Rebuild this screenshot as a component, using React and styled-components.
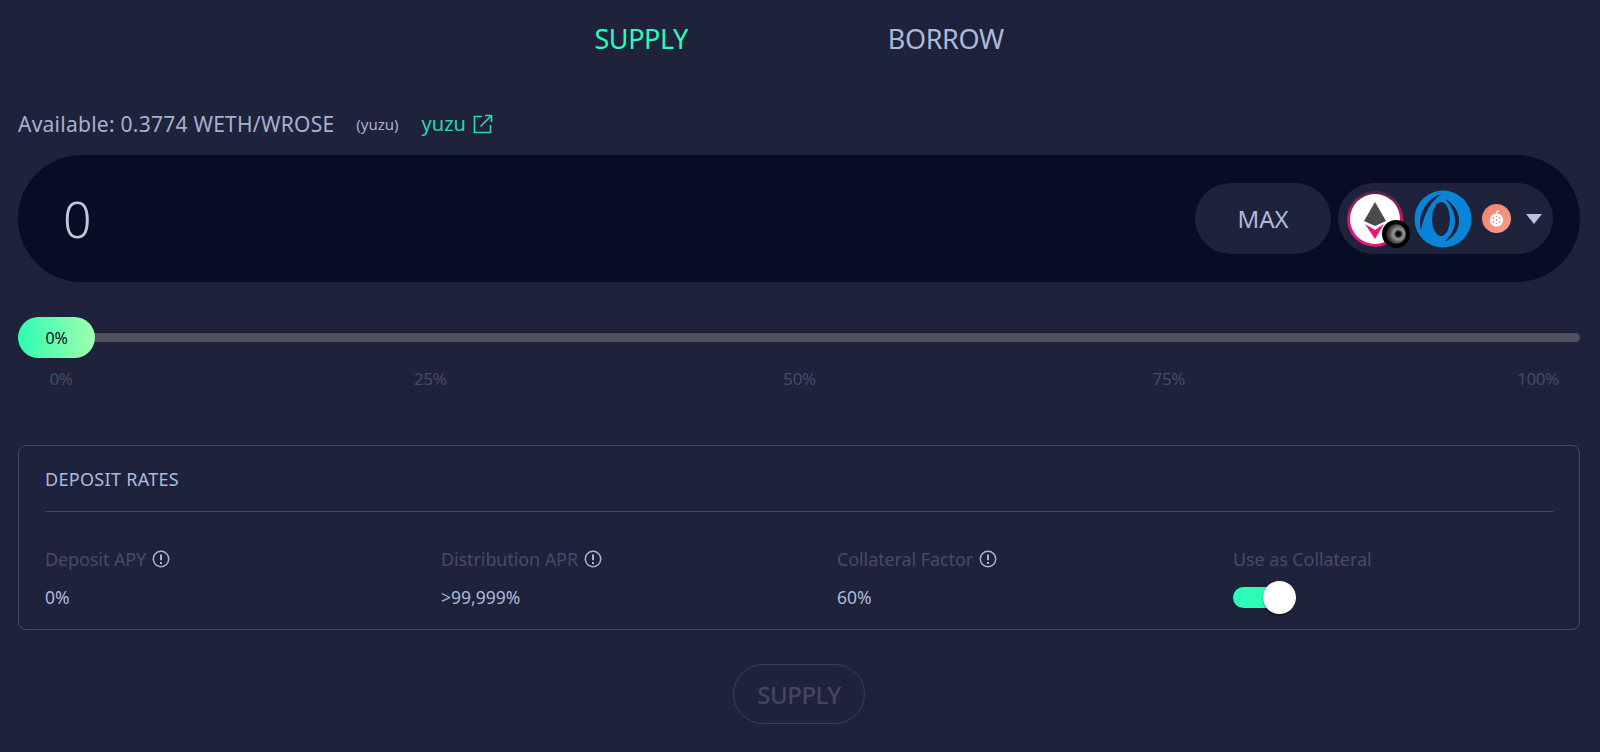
import React from "react";
import styled, { createGlobalStyle } from "styled-components";

const GlobalStyle = createGlobalStyle`
  html, body {
    margin: 0;
    padding: 0;
    background: #1e223b;
    font-family: "Noto Sans", "Liberation Sans", sans-serif;
    overflow: hidden;
  }
`;

const Page = styled.div`
  width: 1600px;
  height: 752px;
  box-sizing: border-box;
  padding: 0 20px 0 18px;
  background: #1e223b;
  color: #bcc8e8;
`;

const Tabs = styled.div`
  display: flex;
  justify-content: center;
  gap: 200px;
  height: 110px;
  padding-top: 22px;
  box-sizing: border-box;
`;

const Tab = styled.div`
  font-size: 27px;
  line-height: 34px;
  letter-spacing: -0.4px;
  color: ${props => (props.$active ? "#2dfcb9" : "#aeb9da")};
`;

const AvailableRow = styled.div`
  display: flex;
  align-items: center;
  height: 27px;
  margin-bottom: 18px;
`;

const AvailableText = styled.span`
  font-size: 21px;
  letter-spacing: 0.25px;
  color: #a5b1d1;
`;

const PoolTag = styled.span`
  font-size: 15px;
  margin-left: 22px;
  color: #a5b1d1;
`;

const PoolLink = styled.a`
  display: flex;
  align-items: center;
  gap: 7px;
  margin-left: 23px;
  font-size: 20px;
  color: #2ad8a6;
`;

const InputBar = styled.div`
  display: flex;
  align-items: center;
  height: 127px;
  border-radius: 64px;
  padding: 0 27px 0 45px;
  background: #080d24;
`;

const Amount = styled.div`
  flex: 1;
  font-size: 50px;
  font-weight: 300;
  color: #bcc8e8;
`;

const MaxButton = styled.div`
  width: 136px;
  height: 71px;
  border-radius: 36px;
  margin-right: 7px;
  display: flex;
  align-items: center;
  justify-content: center;
  font-size: 24px;
  color: #aeb9da;
  background: #1e223b;
`;

const TokenSelect = styled.div`
  display: flex;
  align-items: center;
  width: 215px;
  height: 71px;
  box-sizing: border-box;
  border-radius: 36px;
  padding-left: 9px;
  background: #1e223b;
`;

const TokenStack = styled.div`
  position: relative;
  width: 56px;
  height: 56px;
  margin-right: 11px;
`;

const Badge = styled.div`
  position: absolute;
  right: -7px;
  bottom: -1px;
  width: 28px;
  height: 28px;
`;

const SmallToken = styled.div`
  width: 29px;
  height: 29px;
  margin: 0 15px 0 10px;
`;

const Caret = styled.div`
  width: 0;
  height: 0;
  border-left: 8px solid transparent;
  border-right: 8px solid transparent;
  border-top: 10px solid #b6c2e2;
`;

const Slider = styled.div`
  position: relative;
  margin-top: 35px;
  height: 41px;
  display: flex;
  align-items: center;
`;

const Track = styled.div`
  flex: 1;
  height: 9px;
  border-radius: 5px;
  background: #50515f;
`;

const Thumb = styled.div`
  position: absolute;
  left: 0;
  top: 0;
  width: 77px;
  height: 41px;
  border-radius: 21px;
  display: flex;
  align-items: center;
  justify-content: center;
  font-size: 16px;
  letter-spacing: -0.3px;
  color: #0a0d1c;
  background: linear-gradient(90deg, #2dfcb1, #a1ffae);
`;

const Marks = styled.div`
  display: flex;
  justify-content: space-between;
  padding: 0 20px 0 21px;
  margin-top: 10px;
  margin-bottom: 55px;
  font-size: 17px;
  line-height: 22px;
  letter-spacing: -0.4px;
  color: #474b66;
`;

const Mark = styled.span`
  width: 44px;
  text-align: center;
`;

const RatesCard = styled.div`
  height: 185px;
  box-sizing: border-box;
  border: 1.5px solid #484a5c;
  border-radius: 8px;
  padding: 0 26px;
`;

const RatesTitle = styled.div`
  height: 65px;
  display: flex;
  align-items: center;
  border-bottom: 1.5px solid #45475a;
  font-size: 18px;
  letter-spacing: 0.3px;
  color: #aeb9da;
`;

const RatesGrid = styled.div`
  display: grid;
  grid-template-columns: repeat(4, 396px);
  padding-top: 34px;
`;

const RateLabel = styled.div`
  display: flex;
  align-items: center;
  gap: 6px;
  height: 26px;
  font-size: 18px;
  letter-spacing: -0.1px;
  color: #474b66;
  svg {
    color: #a9b4d4;
  }
`;

const RateValue = styled.div`
  height: 26px;
  margin-top: 12px;
  display: flex;
  align-items: center;
  font-size: 17.5px;
  color: #aeb9da;
`;

const Toggle = styled.div`
  position: relative;
  width: 46px;
  height: 21px;
  margin-top: 15px;
  border-radius: 11px;
  background: #2dfcb9;
`;

const ToggleKnob = styled.div`
  position: absolute;
  right: -17px;
  top: -6px;
  width: 33px;
  height: 33px;
  border-radius: 50%;
  background: #fff;
  box-shadow: 0 1px 2px rgba(0, 0, 0, 0.5);
`;

const SubmitRow = styled.div`
  display: flex;
  justify-content: center;
  margin-top: 34px;
`;

const SubmitButton = styled.div`
  width: 132px;
  height: 60px;
  box-sizing: border-box;
  border: 1.5px solid #3c3e50;
  border-radius: 30px;
  display: flex;
  align-items: center;
  justify-content: center;
  font-size: 24px;
  font-weight: 500;
  letter-spacing: -0.5px;
  color: #44465a;
`;

const ExternalIcon = () => (
  <svg width="20" height="20" viewBox="0 0 20 20" fill="none" stroke="#2ad8a6" strokeWidth="1.7">
    <path d="M9 2.5H1.5v16h16V11" />
    <path d="M7.5 12.5L18 2M12 1.5h6.5V8" />
  </svg>
);

const InfoIcon = () => (
  <svg width="18" height="18" viewBox="0 0 18 18" fill="none" stroke="currentColor" strokeWidth="1.5">
    <circle cx="9" cy="9" r="7.7" />
    <path d="M9 4.5v5.8" strokeWidth="2" />
    <path d="M9 12.1v1.8" strokeWidth="2" />
  </svg>
);

const LpEthIcon = () => (
  <svg width="56" height="56" viewBox="0 0 56 56">
    <defs>
      <linearGradient id="ring" x1="0" y1="0" x2="0" y2="1">
        <stop offset="0" stopColor="#4d2b4a" />
        <stop offset="0.5" stopColor="#d0126c" />
        <stop offset="1" stopColor="#f0127a" />
      </linearGradient>
    </defs>
    <circle cx="28" cy="28" r="28" fill="url(#ring)" />
    <circle cx="28" cy="28" r="25" fill="#fff" />
    <path d="M28 11L17 30l11 5 11-5z" fill="#4a4a4a" />
    <path d="M18 33l10 6 9-6-9 15z" fill="#f0127a" />
  </svg>
);

const VortexIcon = () => (
  <svg width="28" height="28" viewBox="0 0 28 28">
    <defs>
      <radialGradient id="vortex" cx="0.62" cy="0.5" r="0.55">
        <stop offset="0" stopColor="#000" />
        <stop offset="0.2" stopColor="#0a0a0a" />
        <stop offset="0.45" stopColor="#9a9a9a" />
        <stop offset="0.7" stopColor="#666" />
        <stop offset="1" stopColor="#2a2a2a" />
      </radialGradient>
    </defs>
    <circle cx="14" cy="14" r="14" fill="#000" />
    <circle cx="14" cy="14" r="10" fill="url(#vortex)" />
  </svg>
);

const RoseIcon = () => (
  <svg width="58" height="58" viewBox="0 0 58 58">
    <circle cx="29" cy="29" r="28.5" fill="#0a84d6" />
    <ellipse cx="27" cy="29" rx="9" ry="17" fill="#1e223b" />
    <path d="M7 40C3 26 12 8 28 4C17 10 10 24 7 40Z" fill="#1e223b" />
    <path d="M31 9C41 14 46 24 45 33C44 42 38 49 30 52C37 46 41 39 41 31C41 23 37 15 31 9Z" fill="#1e223b" />
  </svg>
);

const YuzuIcon = () => (
  <svg width="29" height="29" viewBox="0 0 29 29">
    <defs>
      <linearGradient id="yuzu" x1="0" y1="0" x2="1" y2="1">
        <stop offset="0" stopColor="#f5806a" />
        <stop offset="1" stopColor="#f0a08c" />
      </linearGradient>
    </defs>
    <circle cx="14.5" cy="14.5" r="14.5" fill="url(#yuzu)" />
    <circle cx="14.5" cy="16" r="6.6" fill="#fff" />
    <path d="M14.5 9.5c.2-1.6 1-2.6 2.6-3" stroke="#fff" strokeWidth="1.4" fill="none" />
    <circle cx="14.5" cy="16" r="1" fill="#ee8f8c" />
    <circle cx="11.5" cy="14" r="0.9" fill="#ee8f8c" />
    <circle cx="17.5" cy="14" r="0.9" fill="#ee8f8c" />
    <circle cx="11.5" cy="18" r="0.9" fill="#ee8f8c" />
    <circle cx="17.5" cy="18" r="0.9" fill="#ee8f8c" />
    <circle cx="14.5" cy="12.5" r="0.8" fill="#ee8f8c" />
    <circle cx="14.5" cy="19.5" r="0.8" fill="#ee8f8c" />
  </svg>
);

const rates = [
  { label: "Deposit APY", value: "0%" },
  { label: "Distribution APR", value: ">99,999%" },
  { label: "Collateral Factor", value: "60%" }
];

const marks = ["0%", "25%", "50%", "75%", "100%"];

export default function App() {
  return (
    <Page>
      <GlobalStyle />
      <Tabs>
        <Tab $active>SUPPLY</Tab>
        <Tab>BORROW</Tab>
      </Tabs>
      <AvailableRow>
        <AvailableText>Available: 0.3774 WETH/WROSE</AvailableText>
        <PoolTag>(yuzu)</PoolTag>
        <PoolLink>
          yuzu <ExternalIcon />
        </PoolLink>
      </AvailableRow>
      <InputBar>
        <Amount>0</Amount>
        <MaxButton>MAX</MaxButton>
        <TokenSelect>
          <TokenStack>
            <LpEthIcon />
            <Badge>
              <VortexIcon />
            </Badge>
          </TokenStack>
          <RoseIcon />
          <SmallToken>
            <YuzuIcon />
          </SmallToken>
          <Caret />
        </TokenSelect>
      </InputBar>
      <Slider>
        <Track />
        <Thumb>0%</Thumb>
      </Slider>
      <Marks>
        {marks.map(mark => (
          <Mark key={mark}>{mark}</Mark>
        ))}
      </Marks>
      <RatesCard>
        <RatesTitle>DEPOSIT RATES</RatesTitle>
        <RatesGrid>
          {rates.map(rate => (
            <div key={rate.label}>
              <RateLabel>
                {rate.label} <InfoIcon />
              </RateLabel>
              <RateValue>{rate.value}</RateValue>
            </div>
          ))}
          <div>
            <RateLabel>Use as Collateral</RateLabel>
            <Toggle>
              <ToggleKnob />
            </Toggle>
          </div>
        </RatesGrid>
      </RatesCard>
      <SubmitRow>
        <SubmitButton>SUPPLY</SubmitButton>
      </SubmitRow>
    </Page>
  );
}
